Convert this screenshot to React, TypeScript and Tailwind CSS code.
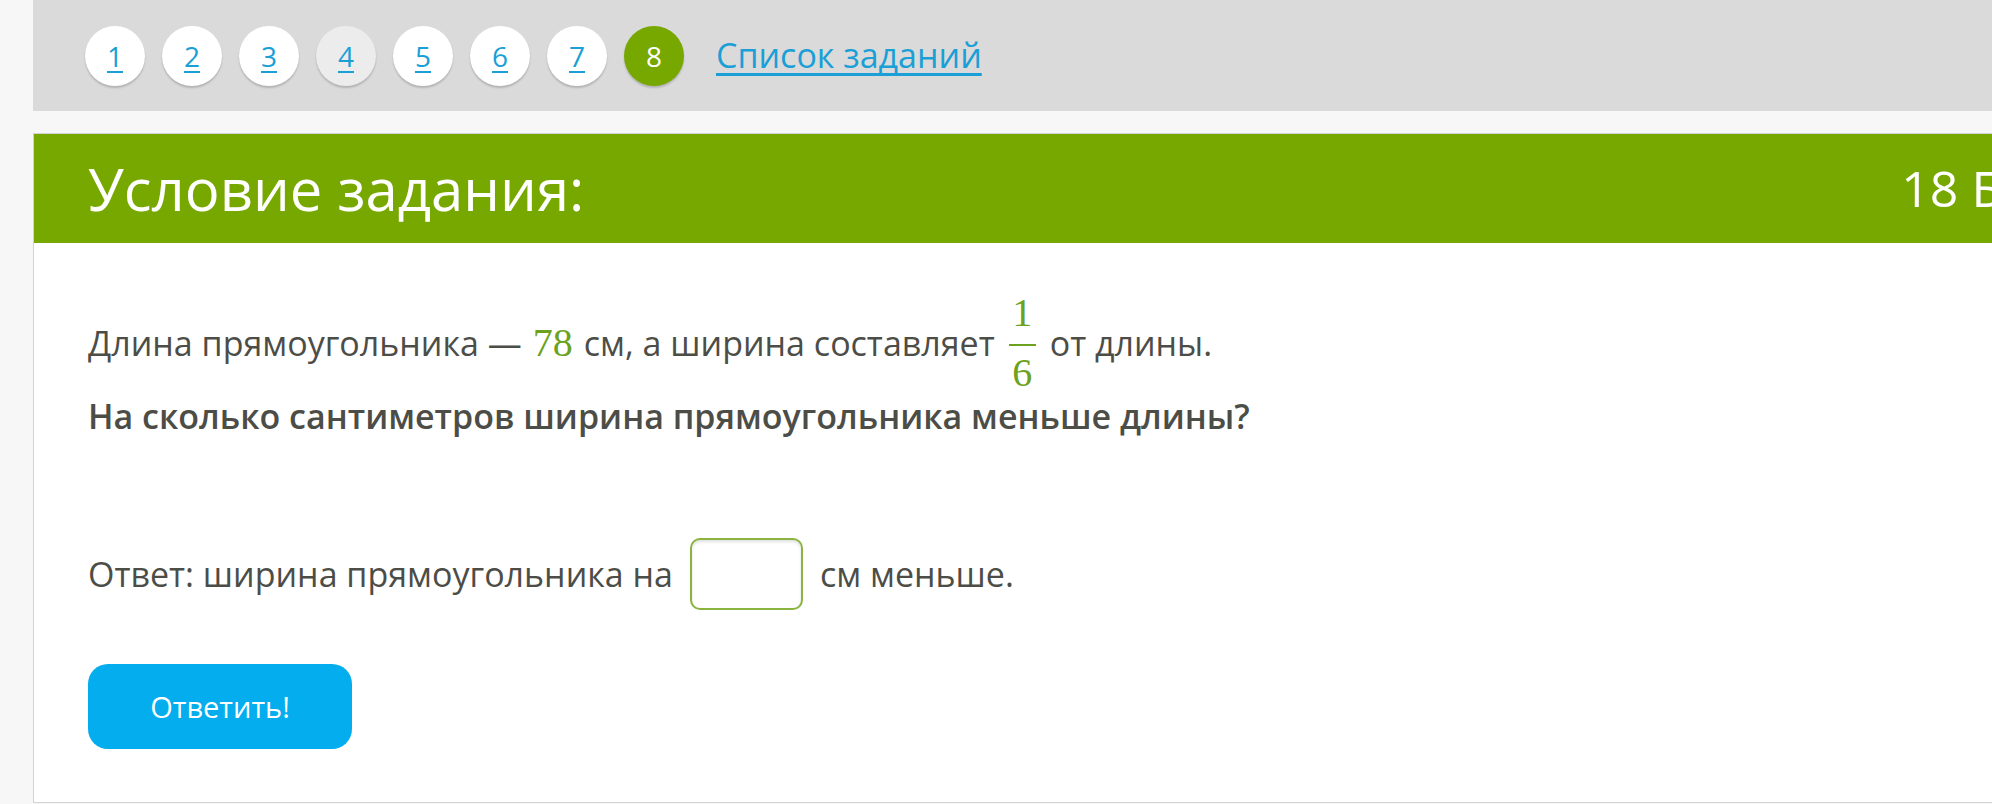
import React from "react";

const pages = [1, 2, 3, 4, 5, 6, 7, 8];
const current = 8;
const visited = 4;

function PageDot({ n }: { n: number }) {
  if (n === current) {
    return (
      <span className="flex h-[60px] w-[60px] items-center justify-center rounded-full bg-[#77a800] text-[28px] text-white shadow-[0_2px_2px_rgba(0,0,0,0.18)]">
        {n}
      </span>
    );
  }
  return (
    <a
      href="#"
      className={
        "flex h-[60px] w-[60px] items-center justify-center rounded-full text-[28px] text-[#1a9fd6] underline underline-offset-[4px] [text-decoration-skip-ink:none] shadow-[0_2px_2px_rgba(0,0,0,0.18)] " +
        (n === visited ? "bg-[#ececec]" : "bg-white")
      }
    >
      {n}
    </a>
  );
}

function Fraction({ top, bottom }: { top: string; bottom: string }) {
  return (
    <span className="mx-[3px] flex flex-col items-center font-['Liberation_Serif',serif] text-[40px] text-[#6ca21e]">
      <span className="mb-[11px] leading-[40px]">{top}</span>
      <span className="h-[2px] w-[27px] bg-[#6ca21e]" />
      <span className="mt-[7px] leading-[40px]">{bottom}</span>
    </span>
  );
}

export default function App() {
  return (
    <div className="flex h-[804px] w-[1992px] overflow-hidden bg-[#f7f7f7] font-['Open_Sans',sans-serif] text-[#4d4d47]">
      <div className="w-px" />
      <div className="w-[2px] bg-[#d9d9d9]" />
      <div className="flex flex-1 flex-col pl-[33px]">
        <nav className="flex h-[111px] items-center gap-[17px] bg-[#dadada] pl-[52px]">
          {pages.map((n) => (
            <PageDot key={n} n={n} />
          ))}
          <a
            href="#"
            className="ml-[15px] text-[34px] text-[#1a9fd6] underline underline-offset-[5px] [text-decoration-skip-ink:none]"
          >
            Список заданий
          </a>
        </nav>

        <div className="mt-[22px] h-[670px] w-[2000px] border border-[#d3d3d3] bg-white">
          <div className="flex h-[109px] items-center bg-[#77a800] pl-[54px] text-white">
            <h1 className="text-[58px] font-normal">Условие задания:</h1>
            <span className="ml-auto mr-[30px] whitespace-nowrap text-[50px]">18 Б</span>
          </div>

          <div className="pl-[54px] pt-[50px] text-[34px] leading-none">
            <div className="flex h-[100px] items-center gap-[11px]">
              <span>Длина прямоугольника —</span>
              <span className="font-['Liberation_Serif',serif] text-[40px] text-[#6ca21e]">78</span>
              <span>см, а ширина составляет</span>
              <Fraction top="1" bottom="6" />
              <span>от длины.</span>
            </div>
            <p className="mt-[3px] font-semibold leading-[40px]">
              На сколько сантиметров ширина прямоугольника меньше длины?
            </p>

            <div className="mt-[102px] flex h-[72px] items-center gap-[17px]">
              <span>Ответ: ширина прямоугольника на</span>
              <input
                type="text"
                className="h-[72px] w-[113px] rounded-[10px] border-2 border-[#8ab43f] bg-white shadow-[inset_0_2px_3px_rgba(0,0,0,0.12)] outline-none"
              />
              <span>см меньше.</span>
            </div>

            <button className="mt-[54px] h-[85px] w-[264px] rounded-[20px] bg-[#03adee] text-[29px] text-white">
              Ответить!
            </button>
          </div>
        </div>
      </div>
    </div>
  );
}
